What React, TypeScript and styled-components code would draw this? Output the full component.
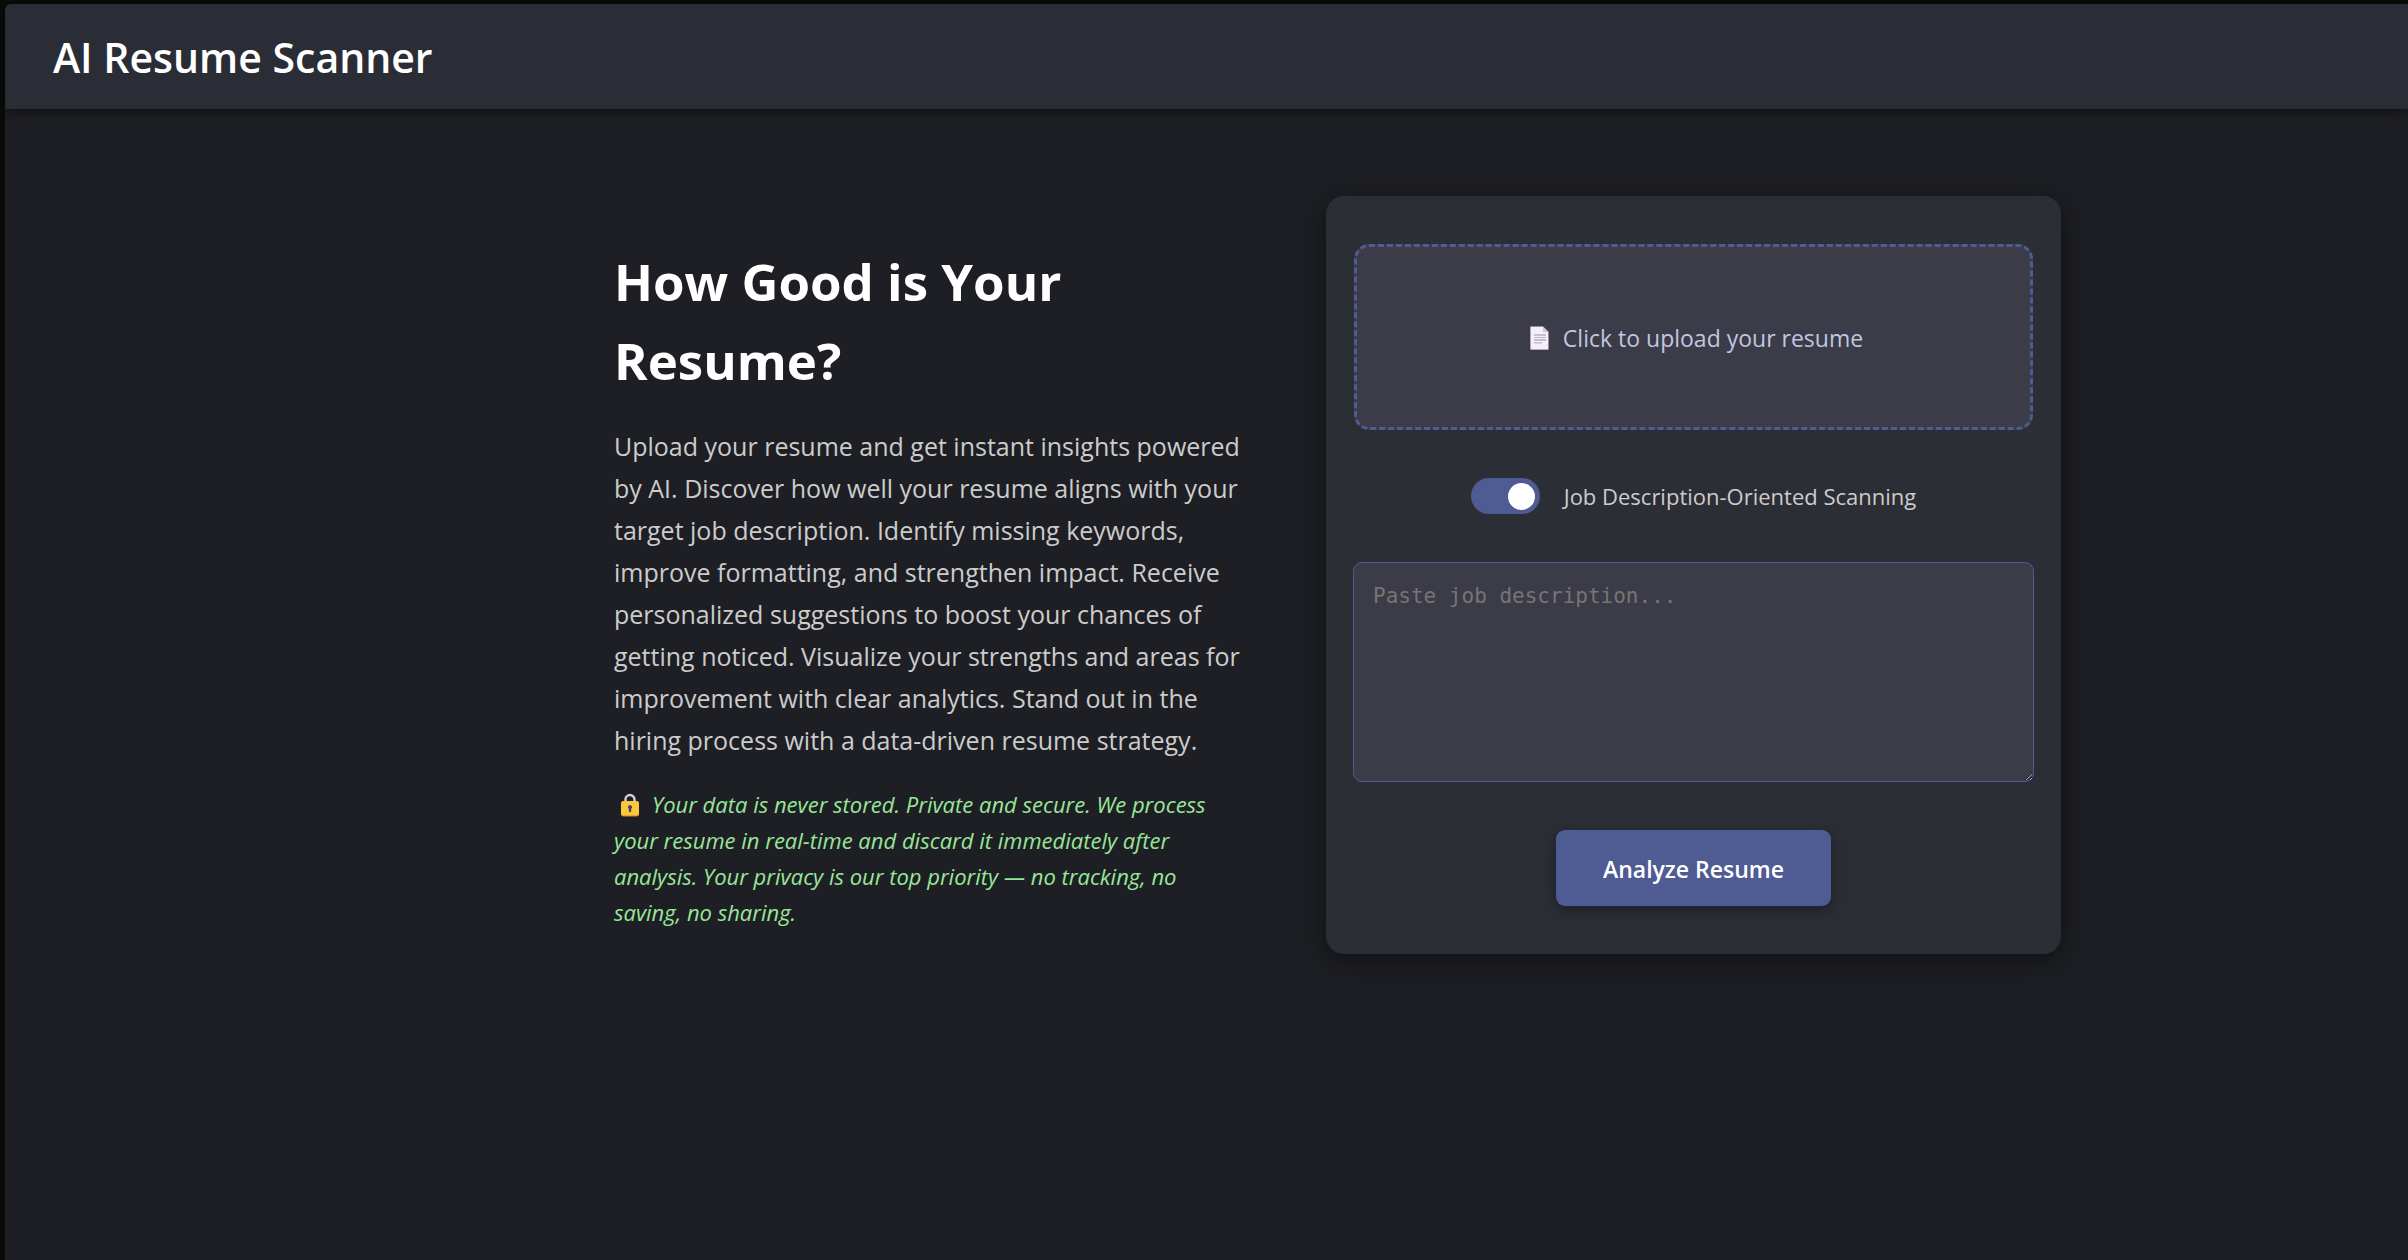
import React, { useState } from "react";
import styled, { createGlobalStyle } from "styled-components";

const colors = {
  frame: "#0b0b09",
  page: "#1e1f24",
  header: "#2a2d35",
  card: "#2c2e36",
  field: "#3b3c47",
  accent: "#4f5b93",
  text: "#cccccc",
  soft: "#c0c6e0",
  safe: "#98e698",
};

const GlobalStyle = createGlobalStyle`
  *, *::before, *::after { box-sizing: border-box; }
  html { background: ${colors.frame}; }
  body {
    margin: 0;
    font-family: "Open Sans", "Noto Sans", sans-serif;
    color: ${colors.text};
  }
`;

const Page = styled.div`
  min-height: 100vh;
  display: flex;
  flex-direction: column;
  border: solid ${colors.frame};
  border-width: 4px 0 0 5px;
`;

const Surface = styled.div`
  flex: 1;
  display: flex;
  flex-direction: column;
  background: ${colors.page};
  border-top-left-radius: 6px;
`;

const Header = styled.header`
  padding: 23px 48px 22px;
  background: ${colors.header};
  border-top-left-radius: 6px;
  box-shadow: 0 3px 12px rgba(0, 0, 0, 0.5);
`;

const Brand = styled.h1`
  margin: 0;
  font-size: 41px;
  line-height: 60px;
  font-weight: 600;
  color: #fff;
`;

const Main = styled.main`
  display: grid;
  grid-template-columns: minmax(0, 632fr) minmax(0, 735fr);
  column-gap: 80px;
  align-items: start;
  padding: 87px 347px 48px 609px;
`;

const Intro = styled.section`
  padding-top: 46px;
`;

const Title = styled.h2`
  margin: 0 0 25px;
  font-size: 51px;
  line-height: 79px;
  font-weight: 700;
  color: #fff;
`;

const Lead = styled.p`
  margin: 0 0 25px;
  font-size: 25px;
  line-height: 42px;
`;

const Privacy = styled.p`
  margin: 0;
  font-size: 22px;
  line-height: 36px;
  font-style: italic;
  color: ${colors.safe};
`;

const LockIcon = styled.svg`
  width: 32px;
  height: 24px;
  margin-right: 6px;
  vertical-align: -4px;
`;

const Card = styled.form`
  display: flex;
  flex-direction: column;
  align-items: center;
  gap: 48px;
  padding: 48px 27px;
  border-radius: 18px;
  background: ${colors.card};
  box-shadow: 0 6px 30px rgba(0, 0, 0, 0.5);
`;

const HiddenFile = styled.input`
  position: absolute;
  width: 1px;
  height: 1px;
  opacity: 0;
`;

const Upload = styled.label`
  position: relative;
  align-self: stretch;
  display: flex;
  align-items: center;
  justify-content: center;
  gap: 14px;
  height: 186px;
  margin: 0 1px;
  padding: 2px 0 0 6px;
  border: 3px dashed ${colors.accent};
  border-radius: 15px;
  background: ${colors.field};
  font-size: 23px;
  color: ${colors.soft};
  cursor: pointer;
`;

const PageIcon = styled.svg`
  width: 19px;
  height: 24px;
`;

const ToggleRow = styled.label`
  display: flex;
  align-items: center;
  gap: 24px;
  height: 36px;
  font-size: 22px;
  cursor: pointer;
`;

const Switch = styled.input`
  appearance: none;
  display: flex;
  align-items: center;
  justify-content: flex-start;
  width: 69px;
  height: 36px;
  margin: 0;
  padding: 0 5px;
  border-radius: 18px;
  background: #55565f;
  cursor: pointer;

  &::before {
    content: "";
    width: 27px;
    height: 27px;
    border-radius: 50%;
    background: #fff;
  }

  &:checked {
    justify-content: flex-end;
    background: ${colors.accent};
  }
`;

const Description = styled.textarea`
  display: block;
  width: 100%;
  height: 220px;
  padding: 20px 19px;
  border: 1px solid ${colors.accent};
  border-radius: 9px;
  background: ${colors.field};
  color: #fff;
  font-family: "DejaVu Sans Mono", monospace;
  font-size: 21px;
  line-height: 27px;
  resize: vertical;

  &::placeholder {
    color: #757575;
  }
`;

const Submit = styled.button`
  height: 76px;
  padding: 2px 47px 0;
  border: 0;
  border-radius: 9px;
  background: ${colors.accent};
  box-shadow: 0 4px 15px rgba(0, 0, 0, 0.35);
  color: #fff;
  font-family: inherit;
  font-size: 23px;
  font-weight: 600;
  cursor: pointer;
`;

export default function App() {
  const [targeted, setTargeted] = useState(true);

  return (
    <Page>
      <GlobalStyle />
      <Surface>
        <Header>
          <Brand>AI Resume Scanner</Brand>
        </Header>
        <Main>
          <Intro>
            <Title>How Good is Your Resume?</Title>
            <Lead>
              Upload your resume and get instant insights powered by AI. Discover how well your
              resume aligns with your target job description. Identify missing keywords, improve
              formatting, and strengthen impact. Receive personalized suggestions to boost your
              chances of getting noticed. Visualize your strengths and areas for improvement with
              clear analytics. Stand out in the hiring process with a data-driven resume strategy.
            </Lead>
            <Privacy>
              <LockIcon viewBox="0 0 32 24" aria-hidden="true">
                <path d="M11.500 10V6.500a4.500 4.500 0 0 1 9 0V10" fill="none" stroke="#d3d0d8" strokeWidth="2.400" />
                <rect x="7" y="8" width="18" height="15.500" rx="2.500" fill="#c98a2b" />
                <rect x="7" y="8" width="18" height="14.500" rx="2.500" fill="#fcc63d" />
                <path d="M16 12a2.100 2.100 0 0 1 1.200 3.800V18a1.200 1.200 0 0 1-2.400 0v-2.200A2.100 2.100 0 0 1 16 12z" fill="#4a3f73" />
              </LockIcon>
              Your data is never stored. Private and secure. We process your resume in real-time
              and discard it immediately after analysis. Your privacy is our top priority — no
              tracking, no saving, no sharing.
            </Privacy>
          </Intro>
          <Card onSubmit={(event) => event.preventDefault()}>
            <Upload>
              <HiddenFile type="file" accept=".pdf,.doc,.docx" />
              <PageIcon viewBox="0 0 19 24" aria-hidden="true">
                <path d="M1 .500h12l5.500 5.500v17a.800.800 0 0 1-.800.800H1A.800.800 0 0 1 .300 23V1.300A.800.800 0 0 1 1 .500z" fill="#f3eef8" stroke="#8d8798" strokeWidth=".500" />
                <path d="M13 .700 18.300 6H13.800a.800.800 0 0 1-.800-.800z" fill="#cdc4d6" />
                <path d="M4 9h12M4 14h12" stroke="#998fa6" strokeWidth="1" />
                <path d="M4 11.500h12M4 16.800h8" stroke="#bdb4c8" strokeWidth="1.200" />
              </PageIcon>
              <span>Click to upload your resume</span>
            </Upload>
            <ToggleRow>
              <Switch
                type="checkbox"
                checked={targeted}
                onChange={(event) => setTargeted(event.target.checked)}
              />
              <span>Job Description-Oriented Scanning</span>
            </ToggleRow>
            <Description aria-label="Job description" placeholder="Paste job description..." />
            <Submit type="submit">Analyze Resume</Submit>
          </Card>
        </Main>
      </Surface>
    </Page>
  );
}
